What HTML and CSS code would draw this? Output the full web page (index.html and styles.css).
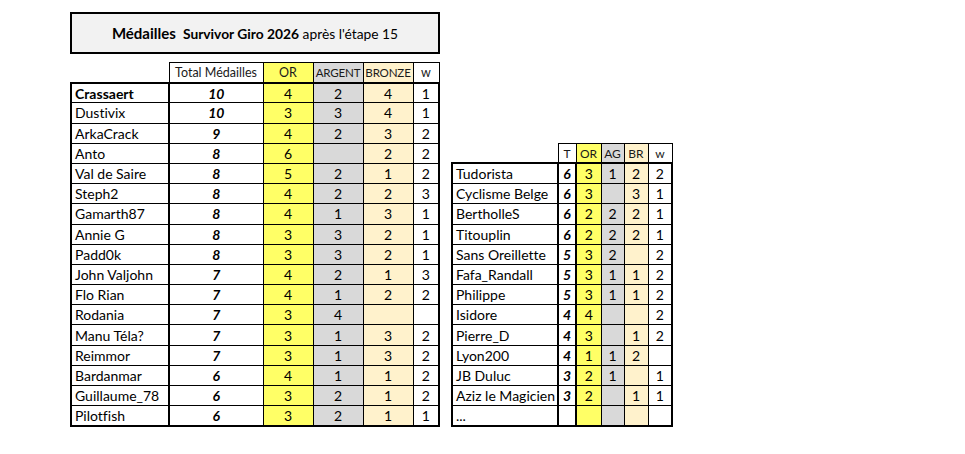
FILE: index.html
```html
<!DOCTYPE html>
<html lang="fr">
<head>
<meta charset="utf-8">
<title>Médailles Survivor Giro 2026</title>
<link rel="stylesheet" href="styles.css">
</head>
<body>
<div class="page">
  <div class="title"><span class="t1">Médailles</span>&nbsp; <span class="t2">Survivor Giro 2026</span>&nbsp;après l'étape 15</div>
  <div class="tables">
    <table class="main">
      <colgroup><col class="c-name"><col class="c-tot"><col class="c-or"><col class="c-ag"><col class="c-br"><col class="c-w"></colgroup>
      <thead>
        <tr><th class="blank"></th><th>Total Médailles</th><th class="or">OR</th><th class="ag small">ARGENT</th><th class="br small">BRONZE</th><th>w</th></tr>
      </thead>
      <tbody>
        <tr><td class="name b">Crassaert</td><td class="tot">10</td><td class="or">4</td><td class="ag">2</td><td class="br">4</td><td>1</td></tr>
        <tr><td class="name">Dustivix</td><td class="tot">10</td><td class="or">3</td><td class="ag">3</td><td class="br">4</td><td>1</td></tr>
        <tr><td class="name">ArkaCrack</td><td class="tot">9</td><td class="or">4</td><td class="ag">2</td><td class="br">3</td><td>2</td></tr>
        <tr><td class="name">Anto</td><td class="tot">8</td><td class="or">6</td><td class="ag"></td><td class="br">2</td><td>2</td></tr>
        <tr><td class="name">Val de Saire</td><td class="tot">8</td><td class="or">5</td><td class="ag">2</td><td class="br">1</td><td>2</td></tr>
        <tr><td class="name">Steph2</td><td class="tot">8</td><td class="or">4</td><td class="ag">2</td><td class="br">2</td><td>3</td></tr>
        <tr><td class="name">Gamarth87</td><td class="tot">8</td><td class="or">4</td><td class="ag">1</td><td class="br">3</td><td>1</td></tr>
        <tr><td class="name">Annie G</td><td class="tot">8</td><td class="or">3</td><td class="ag">3</td><td class="br">2</td><td>1</td></tr>
        <tr><td class="name">Padd0k</td><td class="tot">8</td><td class="or">3</td><td class="ag">3</td><td class="br">2</td><td>1</td></tr>
        <tr><td class="name">John Valjohn</td><td class="tot">7</td><td class="or">4</td><td class="ag">2</td><td class="br">1</td><td>3</td></tr>
        <tr><td class="name">Flo Rian</td><td class="tot">7</td><td class="or">4</td><td class="ag">1</td><td class="br">2</td><td>2</td></tr>
        <tr><td class="name">Rodania</td><td class="tot">7</td><td class="or">3</td><td class="ag">4</td><td class="br"></td><td></td></tr>
        <tr><td class="name">Manu Téla?</td><td class="tot">7</td><td class="or">3</td><td class="ag">1</td><td class="br">3</td><td>2</td></tr>
        <tr><td class="name">Reimmor</td><td class="tot">7</td><td class="or">3</td><td class="ag">1</td><td class="br">3</td><td>2</td></tr>
        <tr><td class="name">Bardanmar</td><td class="tot">6</td><td class="or">4</td><td class="ag">1</td><td class="br">1</td><td>2</td></tr>
        <tr><td class="name">Guillaume_78</td><td class="tot">6</td><td class="or">3</td><td class="ag">2</td><td class="br">1</td><td>2</td></tr>
        <tr><td class="name">Pilotfish</td><td class="tot">6</td><td class="or">3</td><td class="ag">2</td><td class="br">1</td><td>1</td></tr>
      </tbody>
    </table>
    <table class="side">
      <colgroup><col class="s-name"><col class="s-t"><col class="s-or"><col class="s-ag"><col class="s-br"><col class="s-w"></colgroup>
      <thead>
        <tr><th class="blank"></th><th>T</th><th class="or">OR</th><th class="ag">AG</th><th class="br">BR</th><th>w</th></tr>
      </thead>
      <tbody>
        <tr><td class="name">Tudorista</td><td class="tot">6</td><td class="or">3</td><td class="ag">1</td><td class="br">2</td><td>2</td></tr>
        <tr><td class="name">Cyclisme Belge</td><td class="tot">6</td><td class="or">3</td><td class="ag"></td><td class="br">3</td><td>1</td></tr>
        <tr><td class="name">BertholleS</td><td class="tot">6</td><td class="or">2</td><td class="ag">2</td><td class="br">2</td><td>1</td></tr>
        <tr><td class="name">Titouplin</td><td class="tot">6</td><td class="or">2</td><td class="ag">2</td><td class="br">2</td><td>1</td></tr>
        <tr><td class="name">Sans Oreillette</td><td class="tot">5</td><td class="or">3</td><td class="ag">2</td><td class="br"></td><td>2</td></tr>
        <tr><td class="name">Fafa_Randall</td><td class="tot">5</td><td class="or">3</td><td class="ag">1</td><td class="br">1</td><td>2</td></tr>
        <tr><td class="name">Philippe</td><td class="tot">5</td><td class="or">3</td><td class="ag">1</td><td class="br">1</td><td>2</td></tr>
        <tr><td class="name">Isidore</td><td class="tot">4</td><td class="or">4</td><td class="ag"></td><td class="br"></td><td>2</td></tr>
        <tr><td class="name">Pierre_D</td><td class="tot">4</td><td class="or">3</td><td class="ag"></td><td class="br">1</td><td>2</td></tr>
        <tr><td class="name">Lyon200</td><td class="tot">4</td><td class="or">1</td><td class="ag">1</td><td class="br">2</td><td></td></tr>
        <tr><td class="name">JB Duluc</td><td class="tot">3</td><td class="or">2</td><td class="ag">1</td><td class="br"></td><td>1</td></tr>
        <tr><td class="name">Aziz le Magicien</td><td class="tot">3</td><td class="or">2</td><td class="ag"></td><td class="br">1</td><td>1</td></tr>
        <tr><td class="name">...</td><td class="tot"></td><td class="or"></td><td class="ag"></td><td class="br"></td><td></td></tr>
      </tbody>
    </table>
  </div>
</div>
</body>
</html>
```
FILE: styles.css
```css
html, body {
  margin: 0;
  background: #ffffff;
}
body {
  font-family: Lato, "Open Sans", "Liberation Sans", sans-serif;
  font-variant-ligatures: none;
  color: #000;
}
.page {
  padding: 12px 0 0 70px;
}
.title {
  box-sizing: border-box;
  width: 370px;
  height: 42px;
  border: 2px solid #000;
  background: #f2f2f2;
  display: flex;
  align-items: center;
  justify-content: center;
  font-size: 13.8px;
  white-space: pre;
}
.title .t1 {
  font-weight: 700;
  font-size: 15px;
}
.title .t2 {
  font-weight: 700;
}
.tables {
  display: flex;
  align-items: flex-end;
  gap: 11px;
  margin-top: 8px;
}
table {
  border-collapse: collapse;
  table-layout: fixed;
}
tr {
  height: 20.2px;
}
th, td {
  padding: 0;
  border: 1px solid #000;
  text-align: center;
  font-size: 14px;
  white-space: nowrap;
  overflow: hidden;
}
th {
  font-weight: 400;
  font-size: 12.5px;
  color: #1a1a1a;
}
th.blank {
  border: none;
}
tbody {
  border: 2px solid #000;
}
td.name {
  text-align: left;
  padding-left: 3px;
  border-right: 2px solid #000;
}
td.b {
  font-weight: 700;
}
td.tot {
  font-weight: 700;
  font-style: italic;
}
.or { background: #ffff66; }
.ag { background: #d9d9d9; }
.br { background: #fff2cc; }

.main { width: 368px; }
.main .c-name { width: 98px; }
.main .c-tot { width: 94px; }
.main .c-or { width: 50px; }
.main .c-ag { width: 50px; }
.main .c-br { width: 50px; }
.main .c-w { width: 26px; }
.main th { font-size: 12.5px; }
.main th.small { font-size: 11.6px; letter-spacing: -0.2px; }

.side { width: 220px; }
.side .s-name { width: 106px; }
.side .s-t { width: 18px; }
.side .s-or { width: 25px; }
.side .s-ag { width: 23px; }
.side .s-br { width: 24px; }
.side .s-w { width: 24px; }
.side td.tot { border-right: 2px solid #000; }
.side th { font-size: 12px; }
```
